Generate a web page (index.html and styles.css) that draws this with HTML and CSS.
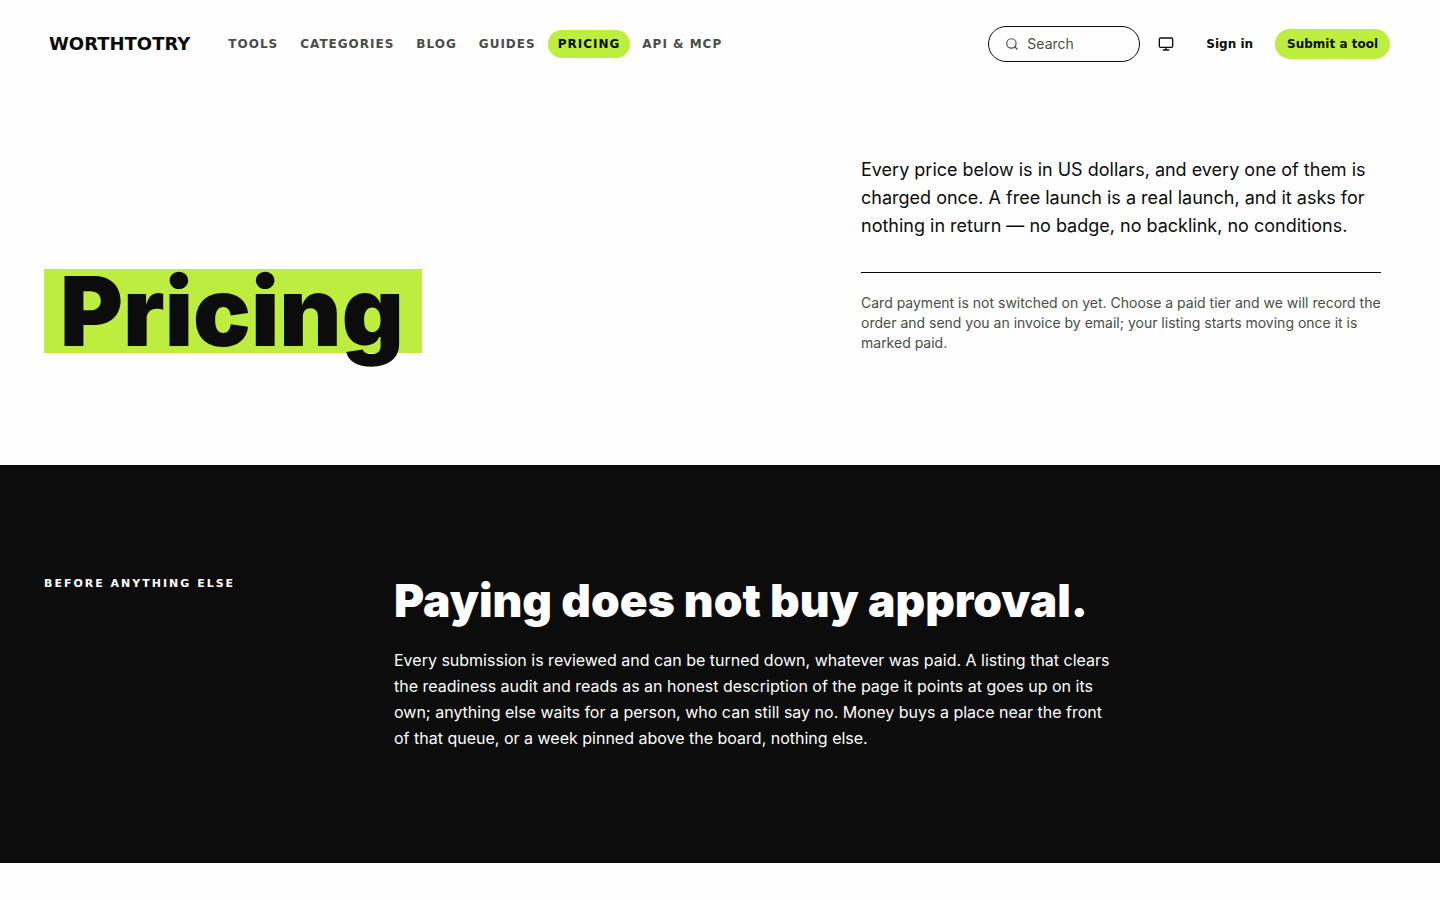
FILE: index.html
```html
<!DOCTYPE html>
<html lang="en">
<head>
<meta charset="utf-8">
<meta name="viewport" content="width=device-width, initial-scale=1">
<title>Pricing — WORTHTOTRY</title>
<link rel="stylesheet" href="styles.css">
</head>
<body>
<header class="header">
  <a class="logo" href="#">WORTHTOTRY</a>
  <nav class="nav" aria-label="Main">
    <a class="nav-link" href="#">TOOLS</a>
    <a class="nav-link" href="#">CATEGORIES</a>
    <a class="nav-link" href="#">BLOG</a>
    <a class="nav-link" href="#">GUIDES</a>
    <a class="nav-link nav-link-active" href="#" aria-current="page">PRICING</a>
    <a class="nav-link" href="#">API &amp; MCP</a>
  </nav>
  <div class="actions">
    <label class="search">
      <svg class="search-icon" viewBox="0 0 24 24" aria-hidden="true"><circle cx="11" cy="11" r="8"/><path d="m21 21-4.3-4.3"/></svg>
      <input class="search-input" type="text" placeholder="Search" aria-label="Search">
    </label>
    <button class="theme" type="button" aria-label="Theme">
      <svg class="theme-icon" viewBox="0 0 24 24" aria-hidden="true"><rect x="2" y="3" width="20" height="14" rx="2"/><path d="M8 21h8M12 17v4"/></svg>
    </button>
    <a class="sign-in" href="#">Sign in</a>
    <a class="submit" href="#">Submit a tool</a>
  </div>
</header>
<main>
  <section class="hero">
    <h1 class="title"><span class="mark">Pricing</span></h1>
    <div class="intro">
      <p class="lead">Every price below is in US dollars, and every one of them is charged once. A free launch is a real launch, and it asks for nothing in return — no badge, no backlink, no conditions.</p>
      <p class="note">Card payment is not switched on yet. Choose a paid tier and we will record the order and send you an invoice by email; your listing starts moving once it is marked paid.</p>
    </div>
  </section>
  <section class="notice">
    <p class="label">BEFORE ANYTHING ELSE</p>
    <div>
      <h2 class="heading">Paying does not buy approval.</h2>
      <p class="text">Every submission is reviewed and can be turned down, whatever was paid. A listing that clears the readiness audit and reads as an honest description of the page it points at goes up on its own; anything else waits for a person, who can still say no. Money buys a place near the front of that queue, or a week pinned above the board, nothing else.</p>
    </div>
  </section>
</main>
</body>
</html>
```
FILE: styles.css
```css
* { box-sizing: border-box; }
body {
  margin: 0;
  background: #fefefe;
  color: #0b0c0b;
  font-family: Inter, "Liberation Sans", sans-serif;
}
h1, h2, p { margin: 0; }
a { color: inherit; text-decoration: none; }
svg { fill: none; stroke: currentColor; stroke-width: 2; stroke-linecap: round; stroke-linejoin: round; }
.logo, .nav-link, .sign-in, .submit, .label {
  font-family: "DejaVu Sans", Inter, sans-serif;
  font-weight: 700;
}

.header {
  display: flex;
  align-items: center;
  height: 88px;
  padding: 0 50px 0 49px;
  white-space: nowrap;
}
.logo { font-size: 18px; line-height: 24px; }
.nav { display: flex; gap: 2px; margin-left: 28px; }
.nav-link {
  padding: 6px 10px;
  border-radius: 14px;
  color: #4a4d46;
  font-size: 12px;
  line-height: 16px;
  letter-spacing: 1px;
}
.nav-link-active { background: #bded3e; color: #0b0c0b; }
.actions { display: flex; align-items: center; margin-left: auto; }
.search {
  display: flex;
  align-items: center;
  gap: 8px;
  width: 152px;
  height: 36px;
  padding: 0 16px;
  border: 1px solid #0b0c0b;
  border-radius: 18px;
  color: #4a4d46;
}
.search-icon { flex: none; width: 14px; height: 14px; }
.search-input {
  flex: 1;
  min-width: 0;
  padding: 0;
  border: 0;
  outline: 0;
  background: none;
  color: inherit;
  font: 14px/20px Inter, sans-serif;
}
.search-input::placeholder { color: #4a4d46; opacity: 1; }
.theme {
  display: grid;
  place-items: center;
  width: 36px;
  height: 36px;
  margin-left: 8px;
  padding: 0;
  border: 0;
  background: none;
  color: inherit;
}
.theme-icon { width: 16px; height: 16px; }
.sign-in, .submit { font-size: 12px; line-height: 26px; }
.sign-in { padding: 0 10px; margin: 0 12px; }
.submit { padding: 2px 12px; border-radius: 15px; background: #bded3e; }

.hero {
  display: grid;
  grid-template-columns: minmax(0, 785fr) minmax(0, 535fr);
  column-gap: 32px;
  align-items: end;
  padding: 68px 44px 112px;
}
.title { font-size: 96px; font-weight: 900; line-height: 84px; }
.mark { display: inline-block; padding: 0 18px 0 16px; background: #bded3e; }
.intro { max-width: 520px; }
.lead { font-size: 18px; line-height: 28px; }
.note {
  margin-top: 32px;
  padding-top: 20px;
  border-top: 1px solid #0b0c0b;
  color: #4a4d46;
  font-size: 14px;
  line-height: 20px;
}

.notice {
  display: grid;
  grid-template-columns: 318px minmax(0, 720px);
  column-gap: 32px;
  padding: 112px 44px;
  background: #0b0c0b;
  color: #fefefe;
}
.label { font-size: 11px; line-height: 14px; letter-spacing: 2px; }
.heading { font-size: 46px; font-weight: 900; line-height: 46px; }
.text { margin-top: 24px; font-size: 16px; line-height: 26px; }
```
